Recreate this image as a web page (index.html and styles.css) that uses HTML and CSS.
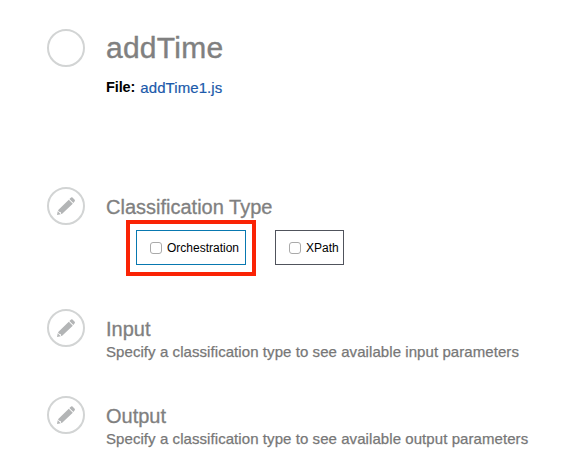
FILE: index.html
```html
<!DOCTYPE html>
<html lang="en">
<head>
<meta charset="utf-8">
<title>addTime</title>
<link rel="stylesheet" href="styles.css">
</head>
<body>
<svg class="defs" width="0" height="0"><symbol id="pencil" viewBox="0 0 20 20"><path d="M1 19l.7-3.800 3.100 3.100zM2 14.300L12.800 3.700l4 4L5.900 18l-.8-.3-.4-1.600-1.700-.4zM13.400 3l1.700-1.500q.7-.5 1.400.1l2.200 2.100q.6.800 0 1.500L17.400 6.900z"/></symbol></svg>
<main class="page">
  <section class="row intro">
    <span class="circle"></span>
    <div class="content">
      <h1>addTime</h1>
      <p class="file"><b>File:</b><a href="#">addTime1.js</a></p>
    </div>
  </section>
  <section class="row classification">
    <span class="circle"><svg class="icon"><use href="#pencil"/></svg></span>
    <div class="content">
      <h2>Classification Type</h2>
      <div class="options">
        <div class="highlight"><label class="option selected"><input type="checkbox"><span>Orchestration</span></label></div>
        <label class="option xpath"><input type="checkbox"><span>XPath</span></label>
      </div>
    </div>
  </section>
  <section class="row input">
    <span class="circle"><svg class="icon"><use href="#pencil"/></svg></span>
    <div class="content"><h2>Input</h2><p class="hint">Specify a classification type to see available input parameters</p></div>
  </section>
  <section class="row output">
    <span class="circle"><svg class="icon"><use href="#pencil"/></svg></span>
    <div class="content"><h2>Output</h2><p class="hint">Specify a classification type to see available output parameters</p></div>
  </section>
</main>
</body>
</html>
```
FILE: styles.css
```css
* { box-sizing: border-box; }
body { margin: 0; background: #fff; font-family: "Liberation Sans", Arial, sans-serif; }
.defs { display: block; }
.page { height: 466px; padding: 29px 0 0 47px; overflow: hidden; }
.row { display: flex; gap: 21px; }
.intro { height: 158px; }
.classification { height: 122px; }
.input { height: 87px; }
.circle { width: 38px; height: 38px; flex: none; border: 2px solid #d2d4d4; border-radius: 50%; display: flex; align-items: center; justify-content: center; }
.icon { width: 20px; height: 20px; fill: #b3b5b6; }
h1, h2, p { margin: 0; white-space: nowrap; }
h1 { font-size: 30px; line-height: 38px; font-weight: 400; letter-spacing: .25px; color: #808080; -webkit-text-stroke: .4px #808080; }
h2 { font-size: 20px; line-height: 24px; padding-top: 8px; font-weight: 400; color: #808080; -webkit-text-stroke: .3px #808080; }
.file { display: flex; gap: 5px; margin-top: 11px; font-size: 15px; line-height: 20px; color: #000; }
.file b { font-size: 14.5px; line-height: 18px; letter-spacing: -.1px; }
.file a { color: #1b5aab; text-decoration: none; letter-spacing: .08px; -webkit-text-stroke: .2px #1b5aab; }
.hint { margin-top: 1px; font-size: 15px; line-height: 20px; letter-spacing: .07px; color: #777; -webkit-text-stroke: .25px #777; }
.options { display: flex; align-items: flex-start; gap: 19px; margin: 1px 0 0 20px; }
.highlight { padding: 6px 6px 7px; border: 4px solid #fa2305; }
.option { display: flex; align-items: center; height: 35px; width: 110px; padding-left: 13px; border: 1px solid #50535c; font-size: 12px; color: #000; }
.selected { border-color: #0878b0; }
.xpath { width: 69px; margin-top: 10px; }
.option input { appearance: none; width: 12px; height: 12px; margin: 0 5px 0 0; flex: none; border: 1px solid #aaa; border-radius: 3px; background: #fff; }
```
